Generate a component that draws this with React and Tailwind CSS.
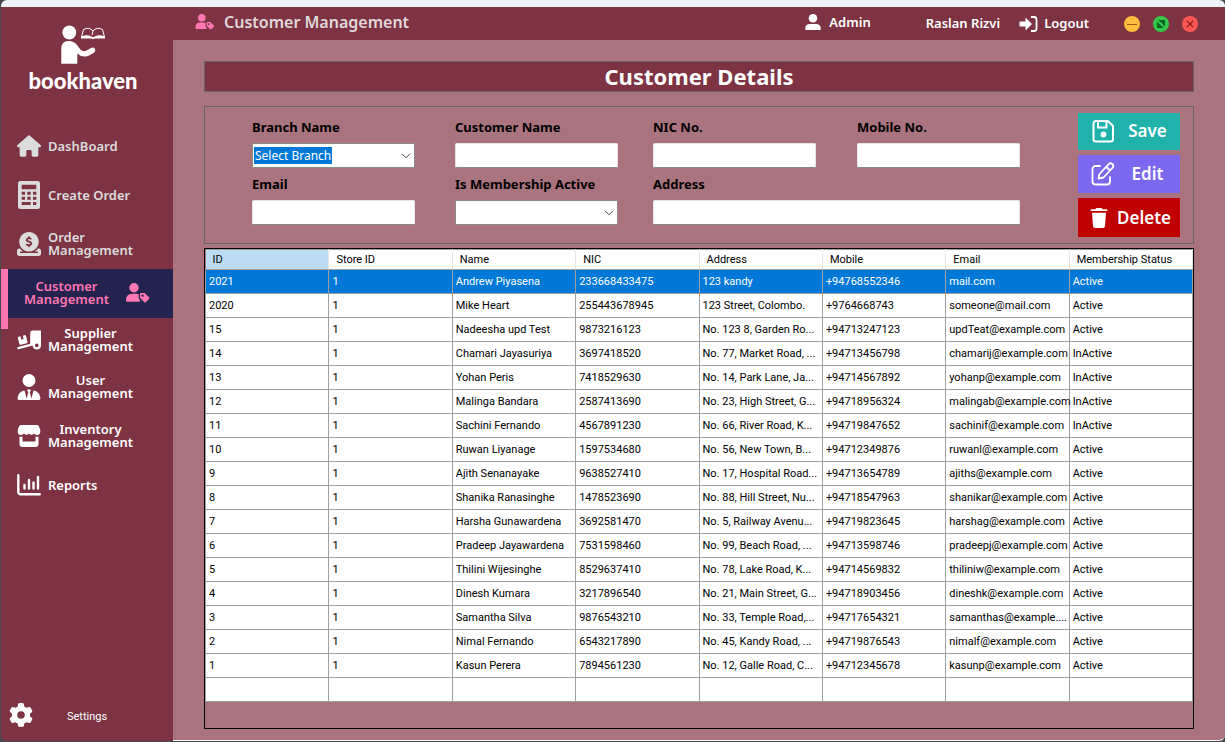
import React from "react";
import { FaHouse, FaCircleDollarToSlot, FaTruckRampBox, FaUserTie, FaGear, FaUser } from "react-icons/fa6";

const rows = [
  ["2021", "1", "Andrew Piyasena", "233668433475", "123 kandy", "+94768552346", "mail.com", "Active"],
  ["2020", "1", "Mike Heart", "255443678945", "123 Street, Colombo.", "+9764668743", "someone@mail.com", "Active"],
  ["15", "1", "Nadeesha upd Test", "9873216123", "No. 123 8, Garden Ro...", "+94713247123", "updTeat@example.com", "Active"],
  ["14", "1", "Chamari Jayasuriya", "3697418520", "No. 77, Market Road, ...", "+94713456798", "chamarij@example.com", "InActive"],
  ["13", "1", "Yohan Peris", "7418529630", "No. 14, Park Lane, Ja...", "+94714567892", "yohanp@example.com", "InActive"],
  ["12", "1", "Malinga Bandara", "2587413690", "No. 23, High Street, G...", "+94718956324", "malingab@example.com", "InActive"],
  ["11", "1", "Sachini Fernando", "4567891230", "No. 66, River Road, K...", "+94719847652", "sachinif@example.com", "InActive"],
  ["10", "1", "Ruwan Liyanage", "1597534680", "No. 56, New Town, B...", "+94712349876", "ruwanl@example.com", "Active"],
  ["9", "1", "Ajith Senanayake", "9638527410", "No. 17, Hospital Road...", "+94713654789", "ajiths@example.com", "Active"],
  ["8", "1", "Shanika Ranasinghe", "1478523690", "No. 88, Hill Street, Nu...", "+94718547963", "shanikar@example.com", "Active"],
  ["7", "1", "Harsha Gunawardena", "3692581470", "No. 5, Railway Avenu...", "+94719823645", "harshag@example.com", "Active"],
  ["6", "1", "Pradeep Jayawardena", "7531598460", "No. 99, Beach Road, ...", "+94713598746", "pradeepj@example.com", "Active"],
  ["5", "1", "Thilini Wijesinghe", "8529637410", "No. 78, Lake Road, K...", "+94714569832", "thiliniw@example.com", "Active"],
  ["4", "1", "Dinesh Kumara", "3217896540", "No. 21, Main Street, G...", "+94718903456", "dineshk@example.com", "Active"],
  ["3", "1", "Samantha Silva", "9876543210", "No. 33, Temple Road,...", "+94717654321", "samanthas@example....", "Active"],
  ["2", "1", "Nimal Fernando", "6543217890", "No. 45, Kandy Road, ...", "+94719876543", "nimalf@example.com", "Active"],
  ["1", "1", "Kasun Perera", "7894561230", "No. 12, Galle Road, C...", "+94712345678", "kasunp@example.com", "Active"],
  ["", "", "", "", "", "", "", ""],
];
const columns = ["ID", "Store ID", "Name", "NIC", "Address", "Mobile", "Email", "Membership Status"];

function ReportIcon() {
  return (
    <svg viewBox="0 0 24 22" className="h-[22px] w-6" fill="none" stroke="currentColor" strokeLinecap="round" strokeLinejoin="round">
      <path d="M1.300 1.300V18a2.200 2.200 0 0 0 2.200 2.200H22.700" strokeWidth="2.400" />
      <path d="M7.500 11v3.500M12 6v8.500M16.500 8.500v6M21 3v11.500" strokeWidth="2.400" />
    </svg>
  );
}

function CalculatorIcon() {
  return (
    <svg viewBox="0 0 22 28" className="h-7 w-[22px]" fill="currentColor">
      <path fillRule="evenodd" d="M2.500 0H19.500Q22 0 22 2.500V25.500Q22 28 19.500 28H2.500Q0 28 0 25.500V2.500Q0 0 2.500 0ZM3.700 3.700V8.300H18.300V3.700ZM3.700 10.700V13.700H7V10.700ZM9.300 10.700V13.700H12.700V10.700ZM15 10.700V13.700H18.300V10.700ZM3.700 15.700V18.700H7V15.700ZM9.300 15.700V18.700H12.700V15.700ZM15 15.700V18.700H18.300V15.700ZM3.700 21V24H12.700V21ZM15 21V24H18.300V21Z" />
    </svg>
  );
}

function ShopIcon() {
  return (
    <svg viewBox="0 0 24 22" className="h-[22px] w-6" fill="currentColor">
      <path d="M4 0H20Q21.200 0 21.700 1L23.200 4.500Q24 10 20 10Q18 10 17 8.600Q14.500 11 12 8.600Q9.500 11 7 8.600Q6 10 4 10Q0 10 .8 4.500L2.300 1Q2.800 0 4 0Z" />
      <path fillRule="evenodd" d="M2.500 11.500Q4 12 5.500 11.500V16.500H18.500V11.500Q20 12 21.500 11.500V19Q21.500 22 18.500 22H5.500Q2.500 22 2.500 19Z" />
    </svg>
  );
}

function CustomerTagIcon({ className }) {
  return (
    <svg viewBox="0 0 24 20" className={className} fill="currentColor">
      <circle cx="8" cy="4.700" r="4.700" />
      <path d="M0 17.500Q0 10.700 6 10.700H10.500Q12 10.700 12.700 11.200V15Q12.700 15.700 14.200 17.500Q14 18.800 13 18.800H1.300Q0 18.800 0 17.500Z" />
      <path fillRule="evenodd" d="M14 11Q14 10 15 10H18.500L23.200 14.400Q23.800 15.100 23.200 15.800L19.700 19.200Q19 19.800 18.300 19.200L14 14.800ZM16.500 11.500A1.100 1.100 0 1 0 16.510 11.500Z" />
    </svg>
  );
}

function LogoMark() {
  return (
    <svg viewBox="0 0 46 40" className="mr-2 h-10 w-[46px]" fill="none" aria-hidden="true">
      <circle cx="9.300" cy="7.500" r="6.900" fill="#fff" />
      <path d="M1.300 38.700V24Q1.300 16 8.500 16Q14 16 17 20L20.500 24.500Q23 27 26 25.800L31.500 22.700Q33.500 22 35 23.700Q36 26.200 34 27.700L28 31Q22 33 17.300 28.500V38.700Z" fill="#fff" />
      <path d="M21.500 12L23.500 4.500Q29 1.500 33 6Q37 1.500 42.500 4.500L44.500 12M21.500 12Q28 9 33 13Q38 9 44.500 12M33 6L32 10" stroke="#fff" strokeWidth="1" />
      <path d="M21 11.500Q28 9.800 33 12.600Q38 9.800 45 11.500V13.600L34.500 13.400Q33 14.600 31.500 13.400L21 13.600Z" fill="#fff" />
    </svg>
  );
}

function NavItem({ icon, children, className = "h-[49px]", tone = "text-white", align = "text-center" }) {
  return (
    <a href="#" className={`flex items-center pb-px pl-4 ${className} ${tone}`}>
      <span className="flex w-6 shrink-0 items-center justify-center">{icon}</span>
      <span className={`ml-[7px] text-[13px] font-semibold leading-[13px] ${align}`}>{children}</span>
    </a>
  );
}

function Field({ id, label, className = "", children }) {
  return (
    <div className={`flex flex-col ${className}`}>
      <label htmlFor={id} className="flex h-5 items-center text-[13px] font-bold text-black">{label}</label>
      {children}
    </div>
  );
}

const inputClass = "mt-[5px] h-[25px] w-full rounded-[2px] border border-[#e5e5e5] border-b-[#868686] bg-white px-1 text-[13px] text-black outline-none";

function Combo({ id, value }) {
  return (
    <div className="relative mt-[5px] flex h-[25px] items-center rounded-[1px] border border-[#8a8a8a] bg-white px-px">
      {value && <span className="bg-[#0078d7] px-px text-[12px] leading-[17px] text-white">{value}</span>}
      <select id={id} className="absolute inset-0 h-full w-full appearance-none opacity-0"><option>{value}</option></select>
      <svg viewBox="0 0 10 6" className="ml-auto mr-[2px] h-[6px] w-[10px]" fill="none" stroke="#444"><path d="M1 .8l4 4 4-4" /></svg>
    </div>
  );
}

export default function App() {
  return (
    <div className="flex min-h-screen flex-col bg-[#47474c] pl-px font-['Noto_Sans',sans-serif]">
      <div className="h-[7px] rounded-t-md bg-[#f0f3fa]" />
      <div className="flex grow">
        <aside className="flex w-[172px] shrink-0 flex-col rounded-bl-md bg-[#7d3342]">
          <div className="flex h-[115px] flex-col items-center pt-[18px] text-white">
            <LogoMark />
            <div className="mt-1 pr-2 font-['Lato',sans-serif] text-[22px] font-black leading-6">bookhaven</div>
          </div>
          <nav>
            <NavItem icon={<FaHouse className="h-6 w-6" />} tone="text-[#dcdcdc]">DashBoard</NavItem>
            <NavItem icon={<CalculatorIcon />} tone="text-[#dcdcdc]">Create Order</NavItem>
            <NavItem icon={<FaCircleDollarToSlot className="h-6 w-6" />} tone="text-[#dcdcdc]" align="text-left">Order<br />Management</NavItem>
            <a href="#" className="relative flex h-[49px] items-center bg-[#242350] pb-px pl-[23px] text-[#ff77b3]">
              <span className="absolute left-0 top-0 h-[60px] w-[7px] bg-[#ff77b3]" />
              <span className="text-center text-[13px] font-semibold leading-[13px]">Customer<br />Management</span>
              <CustomerTagIcon className="ml-[17px] h-5 w-6" />
            </a>
            <NavItem icon={<FaTruckRampBox className="h-[22px] w-6" />} className="h-[45px]">Supplier<br />Management</NavItem>
            <NavItem icon={<FaUserTie className="h-[26px] w-6" />}>User<br />Management</NavItem>
            <NavItem icon={<ShopIcon />}>Inventory<br />Management</NavItem>
            <NavItem icon={<ReportIcon />}>Reports</NavItem>
          </nav>
          <a href="#" className="mb-[14px] mt-auto flex items-center gap-[34px] pl-2 font-['Liberation_Sans_Narrow',Roboto,sans-serif] text-[11px] text-white">
            <FaGear className="h-6 w-6" />
            <span className="pt-1">Settings</span>
          </a>
        </aside>
        <div className="flex min-w-0 grow flex-col">
          <header className="flex h-[33px] shrink-0 items-center bg-[#7d3342] pl-[22px] pr-[27px] text-[13px] font-semibold text-white">
            <CustomerTagIcon className="mb-1 h-4 w-5 text-[#ff77b3]" />
            <h1 className="ml-[9px] pb-1 text-[16px] text-[#e0d8da]">Customer Management</h1>
            <svg viewBox="0 0 16 16" className="mb-1 ml-auto h-4 w-4" fill="currentColor"><circle cx="8" cy="4.300" r="4.300" /><path d="M.3 16V14.500Q.3 10 5 10H11Q15.700 10 15.700 14.500V16Z" /></svg>
            <span className="ml-2 pb-px">Admin</span>
            <span className="ml-[55px]">Raslan Rizvi</span>
            <button className="ml-[19px] flex items-center gap-[6px]">
              <svg viewBox="0 0 19 16" className="h-4 w-[19px]" fill="currentColor"><path d="M.5 5.500H6.500V1.500L13 8L6.500 14.500V10.500H.5Z" /><path d="M12 1H15Q17.500 1 17.500 3.500V12.500Q17.500 15 15 15H12" fill="none" stroke="currentColor" strokeWidth="1.800" /></svg>
              Logout
            </button>
            <div className="ml-[35px] flex gap-[13px]">
              <button aria-label="Minimize"><svg viewBox="0 0 16 16" className="h-4 w-4"><circle cx="8" cy="8" r="8" fill="#ffbd3f" /><path d="M3 8.500h10" stroke="#985712" /></svg></button>
              <button aria-label="Restore"><svg viewBox="0 0 16 16" className="h-4 w-4"><circle cx="8" cy="8" r="8" fill="#34c84a" /><path d="M5.500 4H12V10.500ZM4 5.500V12H10.500Z" fill="#0b6520" /></svg></button>
              <button aria-label="Close"><svg viewBox="0 0 16 16" className="h-4 w-4"><circle cx="8" cy="8" r="8" fill="#fc5753" /><path d="M4.800 4.800l6.400 6.400M11.200 4.800l-6.400 6.400" stroke="#7d1512" strokeWidth="1.200" /></svg></button>
            </div>
          </header>
          <main className="flex grow flex-col rounded-br-md border-b border-white bg-[#aa747e] px-[31px] pb-[11px] pt-[21px]">
            <h2 className="flex h-[31px] items-center justify-center border border-[#666] bg-[#7d3342] text-[22px] font-bold text-white">Customer Details</h2>
            <form className="mt-[14px] flex h-[138px] border border-[#666] pl-[47px] pr-[13px]">
              <div className="grid flex-1 grid-cols-[203fr_198fr_204fr_163fr] content-start gap-y-[7px] pr-[58px] pt-[11px]">
                <Field id="branch" label="Branch Name" className="max-w-[163px]"><Combo id="branch" value="Select Branch" /></Field>
                <Field id="name" label="Customer Name" className="max-w-[163px]"><input id="name" className={inputClass} /></Field>
                <Field id="nic" label="NIC No." className="max-w-[163px]"><input id="nic" className={inputClass} /></Field>
                <Field id="mobile" label="Mobile No."><input id="mobile" className={inputClass} /></Field>
                <Field id="email" label="Email" className="max-w-[163px]"><input id="email" className={inputClass} /></Field>
                <Field id="member" label="Is Membership Active" className="max-w-[163px]"><Combo id="member" value="" /></Field>
                <Field id="address" label="Address" className="col-span-2"><input id="address" className={inputClass} /></Field>
              </div>
              <div className="flex w-[102px] flex-col gap-[5px] pt-[6px] text-[17px] font-semibold text-white">
                <button type="button" className="flex h-[37px] items-center bg-[#20b2aa] pb-px pl-[13px]"><svg viewBox="0 0 24 24" className="h-6 w-6" fill="none" stroke="currentColor" strokeWidth="2"><path d="M5 2H17l5 5V20a2.500 2.500 0 0 1-2.500 2.500H5A2.500 2.500 0 0 1 2.500 20V4.500A2.500 2.500 0 0 1 5 2ZM7 2V8.500H15.500V2" /><circle cx="12.500" cy="15.500" r="2.900" fill="currentColor" stroke="none" /></svg><span className="grow text-center">Save</span></button>
                <button type="button" className="flex h-[38px] items-center bg-[#7b68ee] pl-[13px]"><svg viewBox="0 0 24 24" className="h-6 w-6" fill="none" stroke="currentColor" strokeWidth="1.800" strokeLinecap="round" strokeLinejoin="round"><path d="M9 4H4.500A3 3 0 0 0 1.500 7V19.500A3 3 0 0 0 4.500 22.500H16A3 3 0 0 0 19 19.500V15M7.500 16.500L8.500 12L17.500 2.300a2.500 2.500 0 0 1 4 3.500L12.500 15.500ZM15.500 5l3.500 3.500" /></svg><span className="grow text-center">Edit</span></button>
                <button type="button" className="flex h-[39px] items-center bg-[#c00000] pl-3"><svg viewBox="0 0 18 20" className="h-5 w-[18px]" fill="currentColor"><path d="M5.500 1.200Q5.500 0 7 0H11Q12.500 0 12.500 1.200H16.500Q17.500 1.200 17.500 3H.5Q.5 1.200 1.500 1.200ZM2 4.700H16L15 18Q14.800 20 13 20H5Q3.200 20 3 18Z" /></svg><span className="grow text-center">Delete</span></button>
              </div>
            </form>
            <div className="mt-1 grow border border-black font-['Liberation_Sans_Narrow',Roboto,sans-serif] text-[11px] text-black">
              <table className="w-full table-fixed border-collapse">
                <thead>
                  <tr className="h-5 bg-white">
                    {columns.map((c, i) => <th key={c} className={`border-b border-r border-t border-b-[#a0a0a0] border-r-[#e5e5e5] border-t-[#a0a0a0] p-0 pl-[7px] pt-px text-left font-normal ${i === 0 ? "bg-[#bcdcf4]" : ""}`}>{c}</th>)}
                  </tr>
                </thead>
                <tbody>
                  {rows.map((r, i) => (
                    <tr key={i} className={i === 0 ? "h-6 bg-[#0078d7] text-white" : "h-6 bg-white"}>
                      {r.map((v, j) => <td key={j} className="whitespace-nowrap border border-[#a0a0a0] p-0 pl-[3px] pt-px">{v}</td>)}
                    </tr>
                  ))}
                </tbody>
              </table>
            </div>
          </main>
        </div>
      </div>
      <div className="h-px" />
    </div>
  );
}
